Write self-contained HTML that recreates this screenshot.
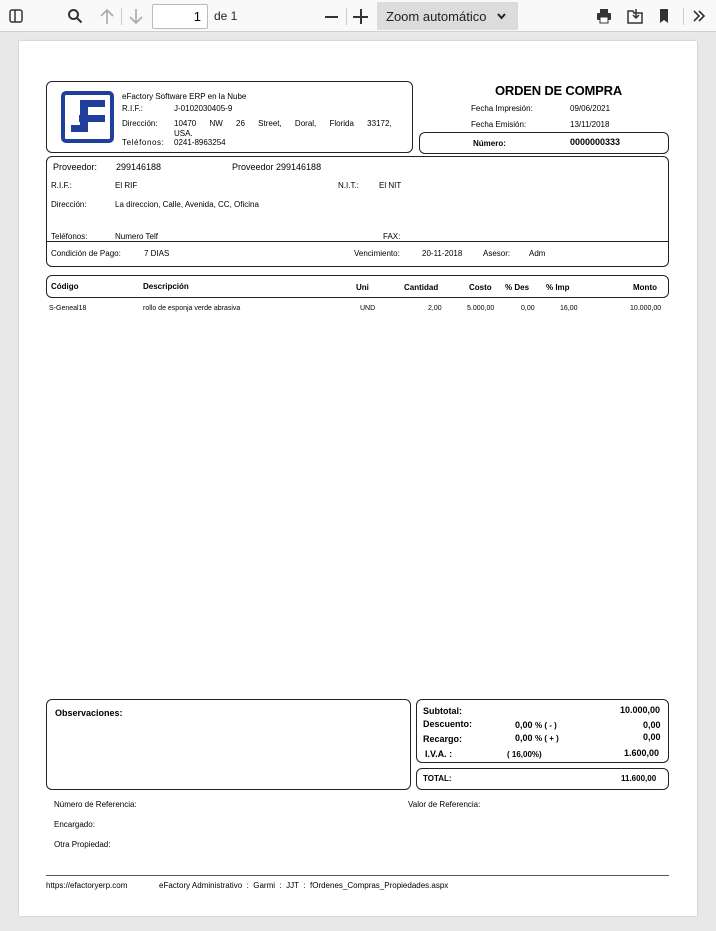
<!DOCTYPE html>
<html><head><meta charset="utf-8"><style>
*{margin:0;padding:0;box-sizing:border-box}
body{width:716px;height:931px;background:#e8e8e8;font-family:"Liberation Sans",sans-serif;position:relative;overflow:hidden;color:#000}
.tb{position:absolute;left:0;top:0;width:716px;height:32px;background:#f9f9fa;border-bottom:1px solid #d0d0d0}
.page{position:absolute;left:19px;top:41px;width:678px;height:875px;background:#fff;box-shadow:0 0 2px #bbb}
.a{position:absolute;white-space:nowrap}
.s{font-size:8px}
.m{font-size:9px}
.b{font-weight:bold}
.box{position:absolute;border:1.3px solid #222;border-radius:6px}
</style></head><body>
<div class="tb">
<svg class="a" style="left:9px;top:9px" width="14" height="14"><rect x="1" y="1" width="12" height="12" rx="2" fill="none" stroke="#333" stroke-width="1.5"/><line x1="6" y1="1" x2="6" y2="13" stroke="#333" stroke-width="1.5"/></svg>
<svg class="a" style="left:67px;top:8px" width="16" height="16"><circle cx="6.5" cy="6.5" r="4.5" fill="none" stroke="#333" stroke-width="2"/><line x1="10" y1="10" x2="14.5" y2="14.5" stroke="#333" stroke-width="2"/></svg>
<svg class="a" style="left:99px;top:8px" width="16" height="17"><path d="M8 16V2M2 8L8 2L14 8" fill="none" stroke="#aaa" stroke-width="1.6"/></svg>
<div class="a" style="left:121px;top:8px;width:1px;height:17px;background:#ccc"></div>
<svg class="a" style="left:128px;top:8px" width="16" height="17"><path d="M8 1V15M2 9L8 15L14 9" fill="none" stroke="#aaa" stroke-width="1.6"/></svg>
<div class="a" style="left:152px;top:4px;width:56px;height:25px;border:1px solid #bbb;background:#fff;border-radius:2px;font-size:13px;text-align:right;padding:4px 6px">1</div>
<div class="a" style="left:214px;top:9px;font-size:12px;color:#222">de 1</div>
<div class="a" style="left:325px;top:16px;width:13px;height:2px;background:#333"></div>
<div class="a" style="left:346px;top:8px;width:1px;height:17px;background:#ccc"></div>
<div class="a" style="left:353px;top:16px;width:15px;height:2px;background:#333"></div>
<div class="a" style="left:359.5px;top:9px;width:2px;height:15px;background:#333"></div>
<div class="a" style="left:377px;top:2px;width:141px;height:28px;background:#dcdcdf;font-size:13px;padding:7px 0 0 9px;color:#222">Zoom automático</div>
<svg class="a" style="left:497px;top:13px" width="9" height="7"><path d="M1 1L4.5 5L8 1" fill="none" stroke="#222" stroke-width="2"/></svg>
<svg class="a" style="left:596px;top:8px" width="16" height="16"><rect x="4" y="1" width="8" height="4" fill="#333"/><rect x="1" y="5" width="14" height="7" rx="1" fill="#333"/><rect x="4" y="9" width="8" height="6" fill="#fff" stroke="#333"/></svg>
<svg class="a" style="left:627px;top:8px" width="16" height="16"><path d="M1 3H6L7 5H15V15H1Z" fill="none" stroke="#333" stroke-width="1.5"/><path d="M9 1V10M6 7L9 10L12 7" fill="none" stroke="#333" stroke-width="1.5"/></svg>
<svg class="a" style="left:659px;top:8px" width="10" height="16"><path d="M1 1H9V15L5 12L1 15Z" fill="#333"/></svg>
<div class="a" style="left:683px;top:8px;width:1px;height:17px;background:#ccc"></div>
<svg class="a" style="left:692px;top:9px" width="14" height="14"><path d="M2 2L7 7L2 12M7 2L12 7L7 12" fill="none" stroke="#333" stroke-width="1.6"/></svg>
</div>
<div class="page"></div>

<div class="box" style="left:46px;top:81px;width:367px;height:72px"></div>
<svg class="a" style="left:61px;top:91px" width="53" height="52"><rect x="2" y="2" width="49" height="48" rx="3" fill="none" stroke="#1f3f9a" stroke-width="4"/><g fill="#1f3f9a"><rect x="19" y="9" width="25" height="7"/><rect x="19" y="9" width="8" height="16"/><rect x="18" y="24" width="26" height="7"/><rect x="19" y="30" width="8" height="5"/><rect x="10" y="34" width="17" height="7"/></g></svg>
<div class="a s" style="left:122px;top:92px">eFactory Software ERP en la Nube</div>
<div class="a s" style="left:122px;top:104px">R.I.F.:</div>
<div class="a s" style="left:174px;top:104px">J-0102030405-9</div>
<div class="a s" style="left:122px;top:119px">Dirección:</div>
<div class="a s" style="left:174px;top:119px;word-spacing:11px">10470 NW 26 Street, Doral, Florida 33172,</div>
<div class="a s" style="left:174px;top:129px">USA.</div>
<div class="a s" style="left:122px;top:138px;letter-spacing:.6px">Teléfonos:</div>
<div class="a s" style="left:174px;top:138px">0241-8963254</div>

<div class="a b" style="left:495px;top:83px;font-size:13px;letter-spacing:-.2px">ORDEN DE COMPRA</div>
<div class="a s" style="left:471px;top:104px">Fecha Impresión:</div>
<div class="a s" style="left:570px;top:104px">09/06/2021</div>
<div class="a s" style="left:471px;top:120px">Fecha Emisión:</div>
<div class="a s" style="left:570px;top:120px">13/11/2018</div>
<div class="box" style="left:419px;top:132px;width:250px;height:22px"></div>
<div class="a s b" style="left:473px;top:139px">Número:</div>
<div class="a m b" style="left:570px;top:137px">0000000333</div>

<div class="box" style="left:46px;top:156px;width:623px;height:111px"></div>
<div class="a" style="left:47px;top:241px;width:621px;height:1px;background:#222"></div>
<div class="a m" style="left:53px;top:162px">Proveedor:</div>
<div class="a m" style="left:116px;top:162px">299146188</div>
<div class="a m" style="left:232px;top:162px">Proveedor 299146188</div>
<div class="a s" style="left:51px;top:181px">R.I.F.:</div>
<div class="a s" style="left:115px;top:181px">El RIF</div>
<div class="a s" style="left:338px;top:181px">N.I.T.:</div>
<div class="a s" style="left:379px;top:181px">El NIT</div>
<div class="a s" style="left:51px;top:200px">Dirección:</div>
<div class="a s" style="left:115px;top:200px">La direccion, Calle, Avenida, CC, Oficina</div>
<div class="a s" style="left:51px;top:232px">Teléfonos:</div>
<div class="a s" style="left:115px;top:232px">Numero Telf</div>
<div class="a s" style="left:383px;top:232px">FAX:</div>
<div class="a s" style="left:51px;top:249px">Condición de Pago:</div>
<div class="a s" style="left:144px;top:249px">7 DIAS</div>
<div class="a s" style="left:354px;top:249px">Vencimiento:</div>
<div class="a s" style="left:422px;top:249px">20-11-2018</div>
<div class="a s" style="left:483px;top:249px">Asesor:</div>
<div class="a s" style="left:529px;top:249px">Adm</div>

<div class="box" style="left:46px;top:275px;width:623px;height:23px"></div>
<div class="a s b" style="left:51px;top:282px">Código</div>
<div class="a s b" style="left:143px;top:282px">Descripción</div>
<div class="a s b" style="left:356px;top:283px">Uni</div>
<div class="a s b" style="left:404px;top:283px">Cantidad</div>
<div class="a s b" style="left:469px;top:283px">Costo</div>
<div class="a s b" style="left:505px;top:283px">% Des</div>
<div class="a s b" style="left:546px;top:283px">% Imp</div>
<div class="a s b" style="left:633px;top:283px">Monto</div>
<div class="a" style="left:49px;top:305px;font-size:7px">S-Geneal18</div>
<div class="a" style="left:143px;top:305px;font-size:7px">rollo de esponja verde abrasiva</div>
<div class="a" style="left:360px;top:305px;font-size:7px">UND</div>
<div class="a" style="left:428px;top:305px;font-size:7px">2,00</div>
<div class="a" style="left:467px;top:305px;font-size:7px">5.000,00</div>
<div class="a" style="left:521px;top:305px;font-size:7px">0,00</div>
<div class="a" style="left:560px;top:305px;font-size:7px">16,00</div>
<div class="a" style="left:630px;top:305px;font-size:7px">10.000,00</div>

<div class="box" style="left:46px;top:699px;width:365px;height:91px"></div>
<div class="a m b" style="left:55px;top:708px">Observaciones:</div>
<div class="box" style="left:416px;top:699px;width:253px;height:64px"></div>
<div class="a m b" style="left:423px;top:706px">Subtotal:</div>
<div class="a m b" style="left:620px;top:705px">10.000,00</div>
<div class="a m b" style="left:423px;top:719px">Descuento:</div>
<div class="a m b" style="left:515px;top:720px">0,00 <span class="s">% ( - )</span></div>
<div class="a m b" style="left:643px;top:720px">0,00</div>
<div class="a m b" style="left:423px;top:734px">Recargo:</div>
<div class="a m b" style="left:515px;top:733px">0,00 <span class="s">% ( + )</span></div>
<div class="a m b" style="left:643px;top:732px">0,00</div>
<div class="a m b" style="left:425px;top:749px">I.V.A. :</div>
<div class="a s b" style="left:507px;top:750px">( 16,00%)</div>
<div class="a m b" style="left:624px;top:748px">1.600,00</div>
<div class="box" style="left:416px;top:768px;width:253px;height:22px"></div>
<div class="a s b" style="left:423px;top:774px">TOTAL:</div>
<div class="a s b" style="left:621px;top:774px">11.600,00</div>

<div class="a s" style="left:54px;top:800px">Número de Referencia:</div>
<div class="a s" style="left:408px;top:800px">Valor de Referencia:</div>
<div class="a s" style="left:54px;top:820px">Encargado:</div>
<div class="a s" style="left:54px;top:840px">Otra Propiedad:</div>
<div class="a" style="left:46px;top:875px;width:623px;height:1px;background:#555"></div>
<div class="a s" style="left:46px;top:881px">https://efactoryerp.com</div>
<div class="a s" style="left:159px;top:881px;white-space:pre">eFactory Administrativo  :  Garmi  :  JJT  :  fOrdenes_Compras_Propiedades.aspx</div>
</body></html>
